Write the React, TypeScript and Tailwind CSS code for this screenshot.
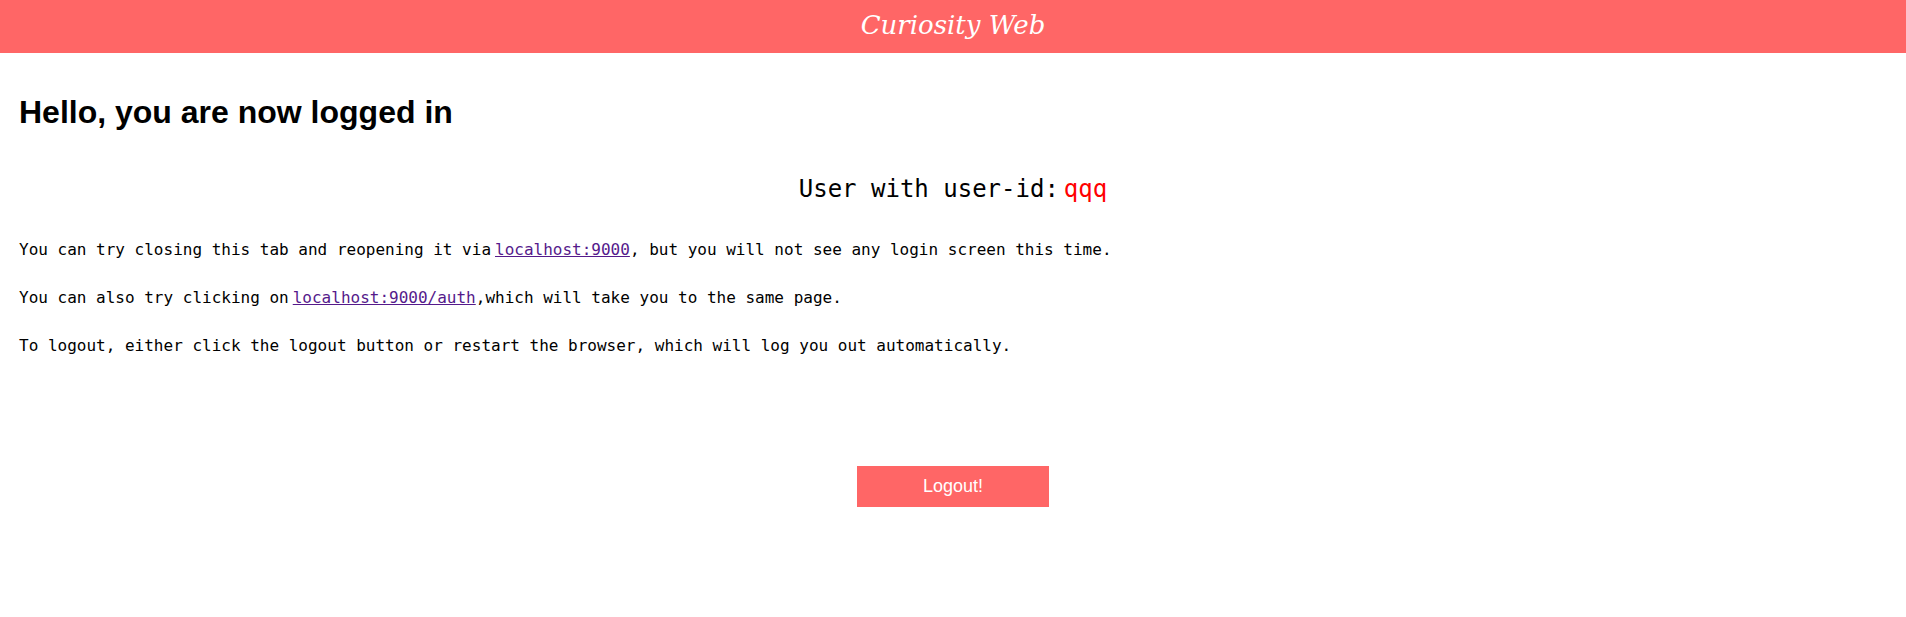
import React from 'react'

function App() {
  const mono = "font-['DejaVu_Sans_Mono','Liberation_Mono',monospace]"

  return (
    <div className="min-h-screen bg-white text-black">
      <header className="h-[53px] bg-[#ff6666] flex items-center justify-center">
        <span className="text-white italic text-[26px] font-['DejaVu_Serif',serif] pb-[3px]">
          Curiosity Web
        </span>
      </header>

      <main className="px-[19px]">
        <h1 className="mt-[40px] text-[32px] leading-[38px] font-bold font-['Liberation_Sans',Arial,sans-serif]">
          Hello, you are now logged in
        </h1>

        <div className={`mt-[42px] text-center text-[24px] leading-[32px] ${mono}`}>
          User with user-id:<span className="ml-[5px] text-[#f00]">qqq</span>
        </div>

        <div className={`mt-[33px] text-[16px] leading-[24px] flex flex-col gap-[24px] ${mono}`}>
          <p>
            You can try closing this tab and reopening it via
            <a href="#" className="ml-[4px] underline text-[#551a8b]">localhost:9000</a>, but you will not see any login screen this time.
          </p>
          <p>
            You can also try clicking on
            <a href="#" className="ml-[4px] underline text-[#551a8b]">localhost:9000/auth</a>,which will take you to the same page.
          </p>
          <p>
            To logout, either click the logout button or restart the browser, which will log you out automatically.
          </p>
        </div>
      </main>

      <div className="flex justify-center mt-[108px]">
        <button className="w-[192px] h-[41px] bg-[#ff6666] text-white text-[18px] font-['Liberation_Sans',Arial,sans-serif]">
          Logout!
        </button>
      </div>
    </div>
  )
}

export default App
